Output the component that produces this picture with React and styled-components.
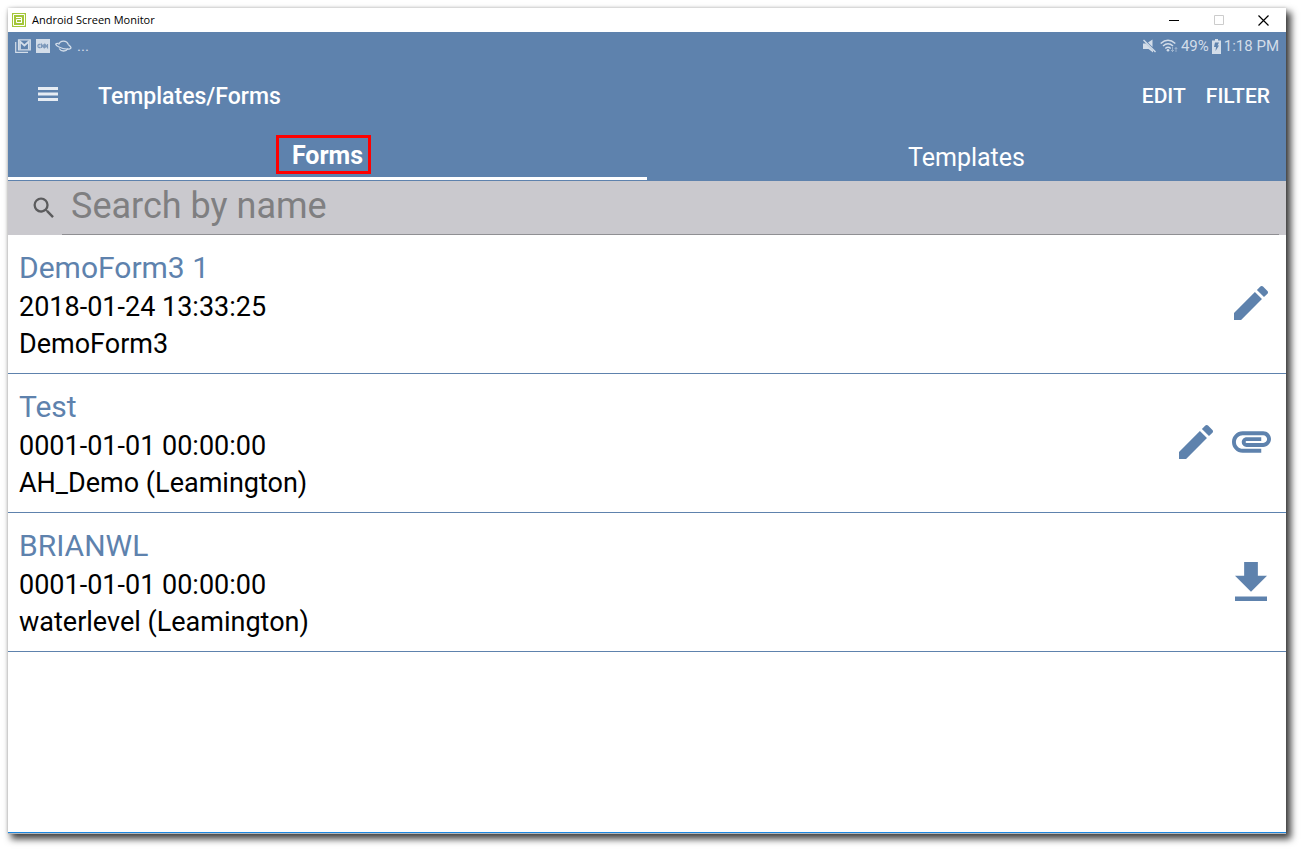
import React from "react";
import styled, { createGlobalStyle } from "styled-components";

const GlobalStyled = createGlobalStyle`
  * {
    margin: 0;
    padding: 0;
    box-sizing: border-box;
  }
  body {
    background: #ffffff;
    font-family: Roboto, "Liberation Sans", sans-serif;
  }
  button {
    border: 0;
    background: none;
    color: inherit;
    font: inherit;
    cursor: pointer;
  }
`;

const Page = styled.div`
  display: flex;
  min-height: 100vh;
  padding: 8px 16px 17px 8px;
`;

const Window = styled.div`
  flex: 1;
  display: flex;
  flex-direction: column;
  background: #ffffff;
  border-bottom: 1px solid #1a86e0;
  box-shadow: 0 1px 0 #b4b8bc, 4px 5px 7px 1px rgba(0, 0, 0, 0.75), 0 0 3px rgba(0, 0, 0, 0.2);
`;

const TitleBar = styled.div`
  display: flex;
  align-items: center;
  height: 24px;
  padding-left: 4px;
  font: 11px "Open Sans", "Noto Sans", sans-serif;
  color: #000000;
`;

const AppName = styled.span`
  flex: 1;
  margin-left: 6px;
  line-height: 20px;
`;

const WindowButton = styled.button`
  display: flex;
  align-items: center;
  justify-content: center;
  width: 45px;
  height: 22px;
`;

const StatusBar = styled.div`
  display: flex;
  justify-content: space-between;
  height: 28px;
  padding: 0 7px;
  background: #5e82ad;
  color: #d3dde9;
  font-size: 15px;
  line-height: 28px;
`;

const StatusGroup = styled.div`
  display: flex;
  align-items: center;
  gap: ${(props) => props.$gap};
`;

const AppBar = styled.header`
  display: flex;
  align-items: center;
  height: 72px;
  padding: 0 16px 0 28px;
  background: #5e82ad;
  color: #ffffff;
`;

const MenuButton = styled.button`
  display: flex;
  padding: 0 2px 4px;
`;

const Title = styled.h1`
  flex: 1;
  margin-left: 38px;
  font-size: 23px;
  font-weight: 500;
`;

const BarButton = styled.button`
  margin-left: 20px;
  font-size: 21px;
  font-weight: 500;
`;

const Tabs = styled.nav`
  display: flex;
  height: 49px;
  padding-bottom: 1px;
  background: #5e82ad;
`;

const Tab = styled.button`
  flex: 1;
  padding-top: ${(props) => (props.$active ? "2px" : "5px")};
  border-bottom: 3px solid ${(props) => (props.$active ? "#ffffff" : "transparent")};
  color: #ffffff;
  font-size: 25px;
  font-weight: ${(props) => (props.$active ? 700 : 400)};
`;

const TabLabel = styled.span`
  position: relative;
`;

const Marker = styled.span`
  position: absolute;
  top: -6px;
  right: -8px;
  bottom: -4px;
  left: -16px;
  border: 3px solid #ff0000;
`;

const Search = styled.label`
  display: flex;
  align-items: center;
  height: 54px;
  padding: 0 7px 0 22px;
  background: #cac9ce;
`;

const SearchInput = styled.input`
  flex: 1;
  min-width: 0;
  height: 54px;
  margin-left: 4px;
  padding: 0 9px 3px;
  border: 0;
  border-bottom: 1px solid #8f8f93;
  outline: 0;
  background: none;
  color: #222222;
  font-family: inherit;
  font-size: 36px;
  &::placeholder {
    color: #7f7f81;
    opacity: 1;
  }
`;

const List = styled.ul`
  list-style: none;
`;

const Row = styled.li`
  display: flex;
  align-items: center;
  justify-content: space-between;
  padding: 12px 15px 10px 11px;
  border-bottom: 1px solid #5e82ad;
`;

const RowTitle = styled.h2`
  color: #5e82ad;
  font-size: 30px;
  font-weight: 400;
  line-height: 42px;
`;

const RowLine = styled.p`
  color: #000000;
  font-size: 27px;
  line-height: 37px;
`;

const Actions = styled.div`
  display: flex;
  gap: 15px;
  padding-bottom: 4px;
`;

const IconButton = styled.button`
  display: flex;
  align-items: center;
  justify-content: center;
  width: 40px;
  height: 40px;
  color: #5e82ad;
`;

const icons = {
  Edit: (
    <svg width="34" height="34" viewBox="3 3 18 18" fill="currentColor">
      <path d="M3 17.25V21h3.75L17.81 9.94l-3.75-3.75L3 17.25zM20.71 7.04c.39-.39.39-1.02 0-1.41l-2.34-2.34c-.39-.39-1.02-.39-1.41 0l-1.83 1.83 3.75 3.75 1.83-1.83z" />
    </svg>
  ),
  Attachment: (
    <svg width="39" height="22" viewBox="2 7 20 11" fill="currentColor">
      <path d="M2 12.5C2 9.46 4.46 7 7.5 7H18c2.21 0 4 1.79 4 4s-1.79 4-4 4H9.5C8.12 15 7 13.88 7 12.5S8.12 10 9.5 10H17v2H9.41c-.55 0-.55 1 0 1H18c1.1 0 2-.9 2-2s-.9-2-2-2H7.5C5.57 9 4 10.57 4 12.5S5.57 16 7.5 16H17v2H7.5C4.46 18 2 15.54 2 12.5z" />
    </svg>
  ),
  Download: (
    <svg width="32" height="39" viewBox="5 3 14 17" preserveAspectRatio="none" fill="currentColor">
      <path d="M19 9h-4V3H9v6H5l7 7 7-7zM5 18v2h14v-2H5z" />
    </svg>
  ),
};

const forms = [
  { title: "DemoForm3 1", date: "2018-01-24 13:33:25", template: "DemoForm3", actions: ["Edit"] },
  { title: "Test", date: "0001-01-01 00:00:00", template: "AH_Demo (Leamington)", actions: ["Edit", "Attachment"] },
  { title: "BRIANWL", date: "0001-01-01 00:00:00", template: "waterlevel (Leamington)", actions: ["Download"] },
];

export default function App() {
  return (
    <>
      <GlobalStyled />
      <Page>
        <Window>
          <TitleBar>
            <svg width="14" height="14" viewBox="0 0 14 14">
              <path fill="#a4c639" d="M0 0h14v14H0z" />
              <path fill="none" stroke="#fff" d="M1.5 1.5h11v11h-11z" />
              <path fill="none" stroke="#fff" d="M4 4.5h5.500V10M9.500 9.500h-5v-3h5" />
            </svg>
            <AppName>Android Screen Monitor</AppName>
            <WindowButton aria-label="Minimize">
              <svg width="10" height="10"><path d="M0 5.500h10" stroke="#000" /></svg>
            </WindowButton>
            <WindowButton aria-label="Maximize" disabled>
              <svg width="10" height="10"><path d="M.5.5h9v9h-9z" fill="none" stroke="#ccc" /></svg>
            </WindowButton>
            <WindowButton aria-label="Close">
              <svg width="11" height="11"><path d="M.5.5l10 10M10.500.5l-10 10" stroke="#000" strokeWidth="1.2" /></svg>
            </WindowButton>
          </TitleBar>

          <StatusBar>
            <StatusGroup $gap="5px">
              <svg width="16" height="14" viewBox="0 0 16 14" fill="none" stroke="currentColor">
                <path d="M.7 3v10.300H13" strokeWidth="1.200" />
                <path d="M3.500.8h11.800v10H3.500z" strokeWidth="1.200" />
                <path d="M5 10.500V2.500l4.400 4 4.400-4v8" strokeWidth="1.700" />
              </svg>
              <svg width="14" height="14" viewBox="0 0 15 14" preserveAspectRatio="none">
                <path fill="currentColor" d="M0 0h15v14H0z" />
                <path fill="none" stroke="#7d99bb" strokeWidth="1.300" d="M5 5.500H3.300Q2 5.500 2 7t1.300 1.500H5M6 9V5.500l2.500 3V5M9.800 9V5.500l2.500 3V5" />
              </svg>
              <svg width="17" height="14" viewBox="0 0 17 14" fill="none" stroke="currentColor" strokeWidth="1.300">
                <path d="M3.700 5.500a5 4.800 0 0 1 9.600 0M13 9.500a5 4.800 0 0 1-8.800 0" />
                <path d="M3.700 4.500C-.5 4 0 6 4 8c5 2.500 12 3 12 .8 0-1.300-1.500-2.300-2.700-3.300" />
              </svg>
              <span>...</span>
            </StatusGroup>
            <StatusGroup $gap="3px">
              <svg width="15" height="14" viewBox="0 0 15 14" fill="currentColor">
                <path d="M1 4.500h3L11 11.500V13.500L6.500 10H1zM6 3.500L10.500.5V8z" />
                <path d="M1.500 1l12 12" stroke="currentColor" strokeWidth="1.400" />
              </svg>
              <svg width="18" height="14" viewBox="0 0 18 14" fill="none" stroke="currentColor">
                <path d="M.7 4.500q7.300-6.500 14.600 0M3 7q5-4.500 10 0M5.300 9.500q2.700-2.500 5.400 0" strokeWidth="1.500" />
                <circle cx="8" cy="11.300" r="1.300" fill="currentColor" stroke="none" />
                <path d="M12.500 8v4.500M11 11l1.500 1.500L14 11M16 13V8.500M14.700 10L16 8.500l1.300 1.500" opacity=".5" />
              </svg>
              <span>49%</span>
              <svg width="9" height="15" viewBox="0 0 9 15">
                <path fill="currentColor" d="M0 1.500h3V0h3v1.500h3V15H0z" />
                <path fill="#5e82ad" d="M3 3.500h4L5.500 6.500H7l-3.500 5.500.5-4H2z" />
              </svg>
              <span>1:18 PM</span>
            </StatusGroup>
          </StatusBar>

          <AppBar>
            <MenuButton aria-label="Menu">
              <svg width="20" height="14" fill="#e6ecf3">
                <path d="M0 0h20v3H0zM0 5.500h20v3H0zM0 11h20v3H0z" />
              </svg>
            </MenuButton>
            <Title>Templates/Forms</Title>
            <BarButton>EDIT</BarButton>
            <BarButton>FILTER</BarButton>
          </AppBar>

          <Tabs>
            <Tab $active>
              <TabLabel>
                Forms
                <Marker />
              </TabLabel>
            </Tab>
            <Tab>Templates</Tab>
          </Tabs>

          <Search>
            <svg width="28" height="28" viewBox="0 0 24 24" fill="#5b5b5d">
              <path d="M15.500 14h-.79l-.28-.27A6.471 6.471 0 0 0 16 9.500 6.500 6.500 0 1 0 9.500 16c1.610 0 3.090-.59 4.230-1.570l.27.28v.79l5 4.990L20.490 19l-4.990-5zm-6 0C7.010 14 5 11.990 5 9.500S7.010 5 9.500 5 14 7.010 14 9.500 11.990 14 9.500 14z" />
            </svg>
            <SearchInput type="text" aria-label="Search by name" placeholder="Search by name" />
          </Search>

          <List>
            {forms.map((form) => (
              <Row key={form.title}>
                <div>
                  <RowTitle>{form.title}</RowTitle>
                  <RowLine>{form.date}</RowLine>
                  <RowLine>{form.template}</RowLine>
                </div>
                <Actions>
                  {form.actions.map((action) => (
                    <IconButton key={action} aria-label={action}>
                      {icons[action]}
                    </IconButton>
                  ))}
                </Actions>
              </Row>
            ))}
          </List>
        </Window>
      </Page>
    </>
  );
}
